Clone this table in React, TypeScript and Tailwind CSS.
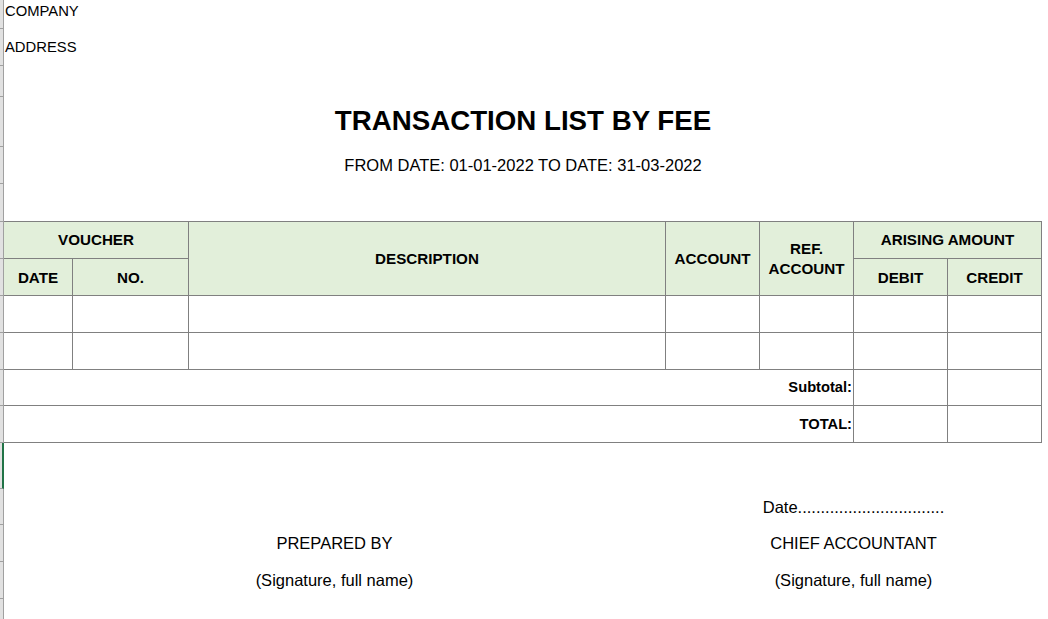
const stripRows = [
  "h-[29px]",
  "h-[37px]",
  "h-[31px]",
  "h-[50px]",
  "h-[37px]",
  "h-[38px]",
  "h-[37px]",
  "h-[37px]",
  "h-[37px]",
  "h-[37px]",
  "h-[36px]",
  "h-[37px]",
  "h-[46px]",
  "h-[36px]",
  "h-[37px]",
  "h-[37px]",
];

const head = "flex items-center justify-center bg-[#e2efda] text-center text-[15.2px] font-bold leading-[20px]";
const cell = "bg-white";

const App = () => {
  return (
    <div className="flex h-[619px] overflow-hidden bg-white font-['Liberation_Sans',Arial,sans-serif] text-black">
      {/* row header strip */}
      <div className="flex w-[4px] shrink-0 flex-col">
        {stripRows.map((h, i) => (
          <div
            key={i}
            className={
              i === 12
                ? `${h} border-b border-r-2 border-b-[#a0a0a0] border-r-[#217346] bg-[#e1e1e1]`
                : `${h} border-b border-r border-[#a0a0a0] bg-[#e1e1e1]`
            }
          />
        ))}
        <div className="flex-1 border-r border-[#a0a0a0] bg-[#e1e1e1]" />
      </div>

      <div className="w-[1038px] shrink-0">
        <div className="h-[29px] pl-px pt-[3px] text-[14.8px] leading-[16px]">COMPANY</div>
        <div className="h-[37px] pl-px pt-[10px] text-[14.8px] leading-[16px]">ADDRESS</div>

        {/* title */}
        <div className="flex h-[155px] flex-col items-center pt-[39px]">
          <h1 className="text-[27.7px] font-bold leading-[32px]">TRANSACTION LIST BY FEE</h1>
          <p className="mt-[18px] text-[16.5px] leading-[20px]">FROM DATE: 01-01-2022 TO DATE: 31-03-2022</p>
        </div>

        {/* table */}
        <div className="grid grid-cols-[68px_115px_476px_93px_93px_93px_93px] grid-rows-[36px_36px_36px_36px_35px_36px] gap-px bg-[#808080] pb-px pr-px pt-px">
          <div className={`${head} col-span-2`}>VOUCHER</div>
          <div className={`${head} row-span-2`}>DESCRIPTION</div>
          <div className={`${head} row-span-2`}>ACCOUNT</div>
          <div className={`${head} row-span-2`}>
            REF.
            <br />
            ACCOUNT
          </div>
          <div className={`${head} col-span-2`}>ARISING AMOUNT</div>
          <div className={`${head} pt-[2px]`}>DATE</div>
          <div className={`${head} pt-[2px]`}>NO.</div>
          <div className={`${head} pt-[2px]`}>DEBIT</div>
          <div className={`${head} pt-[2px]`}>CREDIT</div>

          {[0, 1].map((r) =>
            [0, 1, 2, 3, 4, 5, 6].map((c) => <div key={`${r}-${c}`} className={cell} />)
          )}

          <div className="col-span-5 flex items-center justify-end bg-white pr-px text-[14.7px] font-bold">Subtotal:</div>
          <div className={cell} />
          <div className={cell} />
          <div className="col-span-5 flex items-center justify-end bg-white pr-px text-[14.7px] font-bold">TOTAL:</div>
          <div className={cell} />
          <div className={cell} />
        </div>

        {/* signatures */}
        <div className="grid grid-cols-[661px_377px] grid-rows-[46px_36px_37px_37px] text-[16.5px] leading-[20px]">
          <div />
          <div />
          <div />
          <div className="flex items-center justify-center pb-px">Date................................</div>
          <div className="flex items-center justify-center pb-[2px]">PREPARED BY</div>
          <div className="flex items-center justify-center pb-[2px]">CHIEF ACCOUNTANT</div>
          <div className="flex items-center justify-center pb-[2px]">(Signature, full name)</div>
          <div className="flex items-center justify-center pb-[2px]">(Signature, full name)</div>
        </div>
      </div>
    </div>
  );
};

export default App;
